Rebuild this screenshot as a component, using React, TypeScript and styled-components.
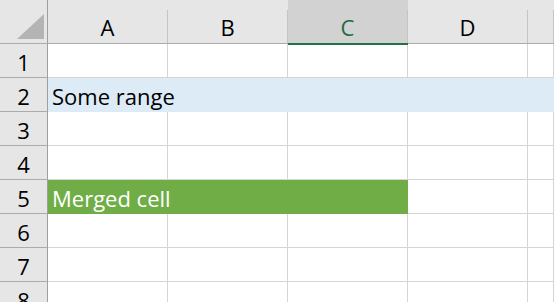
import styled, { createGlobalStyle } from 'styled-components';

const GlobalStyle = createGlobalStyle`
  html, body {
    margin: 0;
    padding: 0;
    background: #ffffff;
    overflow: hidden;
  }
  body {
    font-family: 'Open Sans', 'Noto Sans', sans-serif;
  }
`;

const Sheet = styled.div`
  display: grid;
  grid-template-columns: 48px repeat(4, 120px) 1fr;
  grid-template-rows: 44px repeat(8, 34px);
  width: 554px;
  height: 302px;
  overflow: hidden;
  font-size: 22px;
  line-height: 1;
`;

const Corner = styled.div`
  box-sizing: border-box;
  background: #e6e6e6;
  border-right: 1px solid #9f9f9f;
  border-bottom: 1px solid #ababab;
  display: flex;
  align-items: flex-end;
  justify-content: flex-end;
  padding: 0 3px 4px 0;
  svg {
    display: block;
  }
`;

const ColHeader = styled.div<{ $selected?: boolean }>`
  box-sizing: border-box;
  display: flex;
  flex-direction: column;
  padding-top: 10px;
  background: ${(p) => (p.$selected ? '#d2d2d2' : '#e6e6e6')};
  border-bottom: ${(p) => (p.$selected ? '2px solid #217346' : '1px solid #ababab')};
  margin-bottom: ${(p) => (p.$selected ? '-1px' : '0')};
  position: relative;
  z-index: ${(p) => (p.$selected ? 1 : 0)};
`;

const ColLabel = styled.div<{ $selected?: boolean }>`
  flex: 1;
  display: flex;
  align-items: center;
  justify-content: center;
  border-right: 1px solid #c4c4c4;
  color: ${(p) => (p.$selected ? '#1f6b40' : '#000000')};
  padding-top: 1px;
`;

const RowHeader = styled.div`
  box-sizing: border-box;
  display: flex;
  align-items: center;
  justify-content: center;
  background: #e6e6e6;
  border-right: 1px solid #9f9f9f;
  border-bottom: 1px solid #ababab;
  color: #000000;
  padding-top: 3px;
`;

const Cell = styled.div`
  box-sizing: border-box;
  border-right: 1px solid #d4d4d4;
  border-bottom: 1px solid #d4d4d4;
  background: #ffffff;
`;

const FillCell = styled.div<{ $span: number; $bg: string; $color: string }>`
  grid-column: span ${(p) => p.$span};
  background: ${(p) => p.$bg};
  color: ${(p) => p.$color};
  display: flex;
  align-items: center;
  padding: 2px 0 0 4px;
  white-space: nowrap;
`;

const columns = ['A', 'B', 'C', 'D', ''];

function EmptyCells({ count }: { count: number }) {
  return (
    <>
      {Array.from({ length: count }).map((_, i) => (
        <Cell key={i} />
      ))}
    </>
  );
}

export default function App() {
  return (
    <>
      <GlobalStyle />
      <Sheet>
        <Corner>
          <svg width="27" height="25" viewBox="0 0 27 25">
            <polygon points="27,0 27,25 0,25" fill="#b4b4b4" />
          </svg>
        </Corner>
        {columns.map((c) => (
          <ColHeader key={c || 'end'} $selected={c === 'C'}>
            <ColLabel $selected={c === 'C'}>{c}</ColLabel>
          </ColHeader>
        ))}

        <RowHeader>1</RowHeader>
        <EmptyCells count={5} />

        <RowHeader>2</RowHeader>
        <FillCell $span={5} $bg="#ddebf7" $color="#000000">
          Some range
        </FillCell>

        <RowHeader>3</RowHeader>
        <EmptyCells count={5} />

        <RowHeader>4</RowHeader>
        <EmptyCells count={5} />

        <RowHeader>5</RowHeader>
        <FillCell $span={3} $bg="#70ad47" $color="#ffffff">
          Merged cell
        </FillCell>
        <EmptyCells count={2} />

        <RowHeader>6</RowHeader>
        <EmptyCells count={5} />

        <RowHeader>7</RowHeader>
        <EmptyCells count={5} />

        <RowHeader>8</RowHeader>
        <EmptyCells count={5} />
      </Sheet>
    </>
  );
}
